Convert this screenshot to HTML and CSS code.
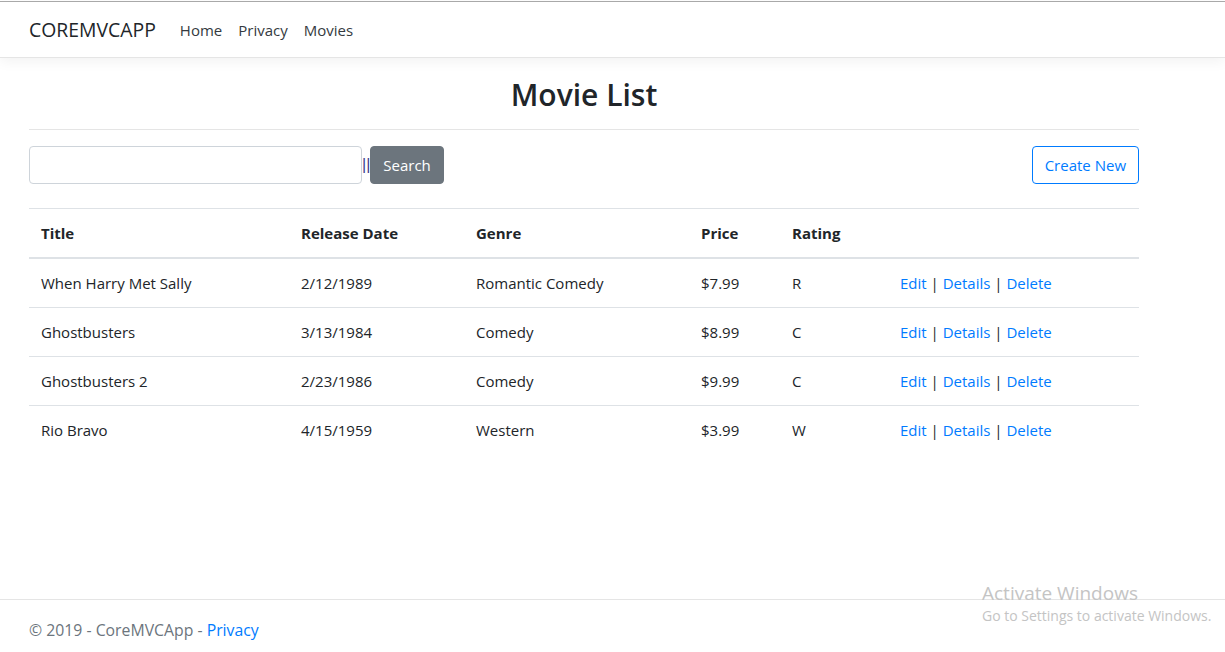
FILE: index.html
```html
<!DOCTYPE html>
<html lang="en">
<head>
<meta charset="utf-8">
<title>Movie List - CoreMVCApp</title>
<link rel="stylesheet" href="styles.css">
</head>
<body>
<header class="topbar">
  <nav class="navbar">
    <div class="nav-inner">
      <a class="brand" href="#">COREMVCAPP</a>
      <ul class="nav-links">
        <li><a href="#">Home</a></li>
        <li><a href="#">Privacy</a></li>
        <li><a href="#">Movies</a></li>
      </ul>
    </div>
  </nav>
</header>

<main class="container">
  <h2 class="page-title">Movie List</h2>
  <hr class="rule">
  <div class="toolbar">
    <form class="search-form">
      <input class="search-input" type="text">
      <span class="bars">||</span>
      <button class="btn btn-secondary" type="button">Search</button>
    </form>
    <a class="btn btn-outline" href="#">Create New</a>
  </div>

  <table class="movies">
    <colgroup>
      <col class="c-title"><col class="c-date"><col class="c-genre"><col class="c-price"><col class="c-rating"><col class="c-actions">
    </colgroup>
    <thead>
      <tr><th>Title</th><th>Release Date</th><th>Genre</th><th>Price</th><th>Rating</th><th></th></tr>
    </thead>
    <tbody>
      <tr><td>When Harry Met Sally</td><td>2/12/1989</td><td>Romantic Comedy</td><td>$7.99</td><td>R</td><td><a href="#">Edit</a> | <a href="#">Details</a> | <a href="#">Delete</a></td></tr>
      <tr><td>Ghostbusters</td><td>3/13/1984</td><td>Comedy</td><td>$8.99</td><td>C</td><td><a href="#">Edit</a> | <a href="#">Details</a> | <a href="#">Delete</a></td></tr>
      <tr><td>Ghostbusters 2</td><td>2/23/1986</td><td>Comedy</td><td>$9.99</td><td>C</td><td><a href="#">Edit</a> | <a href="#">Details</a> | <a href="#">Delete</a></td></tr>
      <tr><td>Rio Bravo</td><td>4/15/1959</td><td>Western</td><td>$3.99</td><td>W</td><td><a href="#">Edit</a> | <a href="#">Details</a> | <a href="#">Delete</a></td></tr>
    </tbody>
  </table>
</main>

<footer class="footer">
  <div class="footer-inner">&copy; 2019 - CoreMVCApp - <a href="#">Privacy</a></div>
</footer>

<div class="watermark">
  <div class="wm-title">Activate Windows</div>
  <div class="wm-sub">Go to Settings to activate Windows.</div>
</div>
</body>
</html>
```

FILE: styles.css
```css
* { box-sizing: border-box; }
html, body { margin: 0; padding: 0; }
body {
  font-family: "Open Sans", "Noto Sans", sans-serif;
  font-size: 15px;
  line-height: 24px;
  color: #212529;
  background: #fff;
  min-height: 660px;
  display: flex;
  flex-direction: column;
}
a { color: #007bff; text-decoration: none; }

.topbar { padding-top: 1px; }
.navbar {
  border-top: 1px solid #a9a9a9;
  border-bottom: 1px solid #e5e5e5;
  box-shadow: 0 4px 12px rgba(0,0,0,.05);
  background: #fff;
  height: 57px;
  padding: 8px 0;
}
.nav-inner {
  width: 1140px;
  margin-left: 14px;
  padding: 0 15px;
  display: flex;
  align-items: center;
  height: 40px;
}
.brand {
  font-size: 19.4px;
  line-height: 30px;
  color: #212529;
  margin-right: 16px;
  padding: 5px 0;
}
.nav-links { list-style: none; margin: 0; padding: 0; display: flex; }
.nav-links a { display: block; padding: 8px; color: #343a40; }

.container {
  width: 1140px;
  margin-left: 14px;
  padding: 18px 15px 0;
  flex: 1;
}
.page-title {
  margin: 0;
  text-align: center;
  font-size: 30px;
  font-weight: 600;
  line-height: 38px;
}
.rule { border: 0; border-top: 1px solid #e5e5e5; margin: 15px 0 16px; }

.toolbar { display: flex; justify-content: space-between; align-items: center; margin-bottom: 24px; }
.search-form { display: flex; align-items: center; }
.search-input {
  width: 333px;
  height: 38px;
  border: 1px solid #ced4da;
  border-radius: 4px;
  font: inherit;
  padding: 6px 12px;
}
.bars {
  font-family: "Liberation Sans", sans-serif;
  font-size: 16px;
  color: #3d3a8a;
  line-height: 1;
  white-space: nowrap;
  margin-right: 0;
}
.btn {
  display: inline-block;
  height: 38px;
  padding: 6px 12px;
  border-radius: 4px;
  font: inherit;
  line-height: 24px;
  border: 1px solid transparent;
}
.btn-secondary { background: #6c757d; border-color: #6c757d; color: #fff; }
.btn-outline { border-color: #007bff; color: #007bff; background: #fff; }

.movies { width: 1110px; border-collapse: collapse; table-layout: fixed; }
.c-title { width: 260px; }
.c-date { width: 175px; }
.c-genre { width: 225px; }
.c-price { width: 91px; }
.c-rating { width: 108px; }
.c-actions { width: 251px; }
.movies th, .movies td {
  text-align: left;
  padding: 12px;
  vertical-align: top;
  border-top: 1px solid #dee2e6;
}
.movies th { font-weight: 700; border-bottom: 2px solid #dee2e6; }
.movies tbody tr:first-child td { border-top: 0; }

.footer {
  border-top: 1px solid #e5e5e5;
  line-height: 60px;
  font-size: 15.8px;
  color: #6c757d;
  white-space: nowrap;
}
.footer-inner { width: 1140px; margin-left: 14px; padding: 0 15px; }

.watermark {
  position: absolute;
  left: 982px;
  top: 580px;
  color: #c4c4c4;
  white-space: nowrap;
  font-family: "Open Sans", "Noto Sans", sans-serif;
}
.wm-title { font-size: 19px; line-height: 26px; }
.wm-sub { font-size: 14px; line-height: 20px; }
```
